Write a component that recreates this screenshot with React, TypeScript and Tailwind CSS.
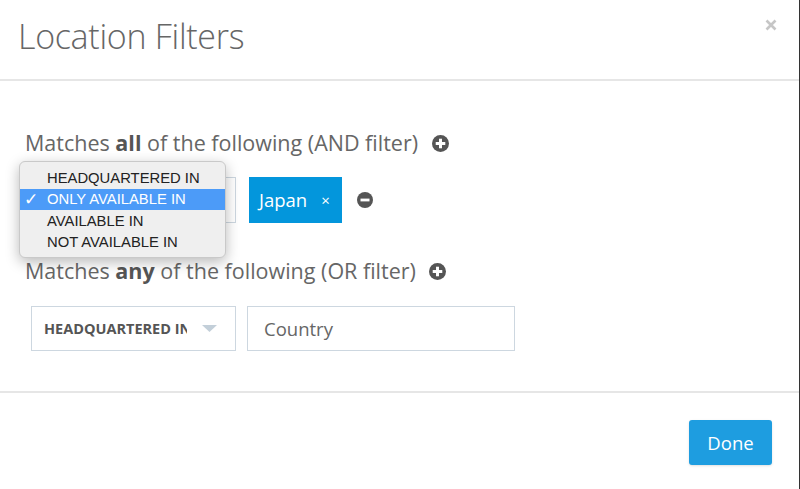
function PlusCircle() {
  return (
    <svg width="17" height="17" viewBox="0 0 16 16" className="shrink-0">
      <circle cx="8" cy="8" r="8" fill="#555" />
      <rect x="3.5" y="6.6" width="9" height="2.8" fill="#fff" />
      <rect x="6.6" y="3.5" width="2.8" height="9" fill="#fff" />
    </svg>
  )
}

function MinusCircle() {
  return (
    <svg width="16" height="16" viewBox="0 0 16 16" className="shrink-0">
      <circle cx="8" cy="8" r="8" fill="#555" />
      <rect x="3.5" y="6.6" width="9" height="2.8" fill="#fff" />
    </svg>
  )
}

const options = ['HEADQUARTERED IN', 'ONLY AVAILABLE IN', 'AVAILABLE IN', 'NOT AVAILABLE IN']

export default function App() {
  return (
    <div className="w-[800px] h-[489px] bg-white border-r border-[#333] flex flex-col font-['Open_Sans',sans-serif] text-[#666] overflow-hidden">
      {/* header */}
      <div className="h-[81px] shrink-0 border-b-2 border-[#e6e6e6] flex items-start justify-between pl-[18px] pr-[22px]">
        <h1 className="mt-[13px] text-[34px] leading-[46px] font-light tracking-[-0.3px] text-[#666]">Location Filters</h1>
        <svg width="12" height="12" viewBox="0 0 12 12" className="mt-[19px]">
          <path d="M1.5 1.5 L10.5 10.5 M10.5 1.5 L1.5 10.5" stroke="#c6c6c6" strokeWidth="2.6" />
        </svg>
      </div>

      {/* body */}
      <div className="relative flex-1 pl-[25px] pt-[48px]">
        <div className="flex items-center gap-[14px] h-[28px]">
          <p className="text-[21.5px] leading-[28px] whitespace-nowrap">
            Matches <b className="font-bold text-[#555]">all</b> of the following (AND filter)
          </p>
          <PlusCircle />
        </div>

        <div className="mt-[20px] ml-[6px] flex items-center h-[46px]">
          <div className="w-[205px] h-[46px] border border-[#cdd7e0]" />
          <div className="ml-[13px] h-[46px] w-[93px] bg-[#0396dc] text-white flex items-center pl-[10px]">
            <span className="text-[18.5px]">Japan</span>
            <span className="ml-[14px] text-[15px]">×</span>
          </div>
          <div className="ml-[15px]">
            <MinusCircle />
          </div>
        </div>

        <div className="mt-[34px] flex items-center gap-[13px] h-[28px]">
          <p className="text-[21.5px] leading-[28px] whitespace-nowrap">
            Matches <b className="font-bold text-[#555]">any</b> of the following (OR filter)
          </p>
          <PlusCircle />
        </div>

        <div className="mt-[21px] ml-[6px] flex items-center gap-[11px]">
          <div className="w-[205px] h-[45px] border border-[#cdd7e0] flex items-center pl-[12px] pr-[18px]">
            <span className="w-[143px] overflow-hidden whitespace-nowrap text-[14.5px] font-bold text-[#555]">HEADQUARTERED IN</span>
            <svg width="15" height="7" viewBox="0 0 15 7" className="ml-auto">
              <path d="M0 0 L15 0 L7.5 7 Z" fill="#c3cfd9" />
            </svg>
          </div>
          <div className="w-[268px] h-[45px] border border-[#cdd7e0] flex items-center pl-[16px]">
            <span className="text-[18.5px] text-[#666]">Country</span>
          </div>
        </div>

        {/* native select menu */}
        <div className="absolute left-[19px] top-[80px] w-[207px] pt-[5px] pb-[4px] bg-[#efefef] rounded-[6px] border border-[#c9c9c9] shadow-[0_4px_14px_rgba(0,0,0,0.28)] font-['Liberation_Sans',sans-serif] text-[14.8px] text-[#222]">
          {options.map((o, i) => (
            <div
              key={o}
              className={
                'h-[21.5px] flex items-center pl-[27px] relative ' +
                (i === 1 ? 'bg-[#4c9bf8] text-white' : '')
              }
            >
              {i === 1 && <span className="absolute left-[4px] font-['DejaVu_Sans',sans-serif] font-bold text-[17px] leading-none">✓</span>}
              {o}
            </div>
          ))}
        </div>
      </div>

      {/* footer */}
      <div className="h-[98px] shrink-0 border-t-2 border-[#e6e6e6] flex justify-end items-start pr-[27px] pt-[27px]">
        <button className="w-[83px] h-[45px] rounded-[3px] bg-[#1e9de0] text-white text-[18.5px] shadow-sm">Done</button>
      </div>
    </div>
  )
}
